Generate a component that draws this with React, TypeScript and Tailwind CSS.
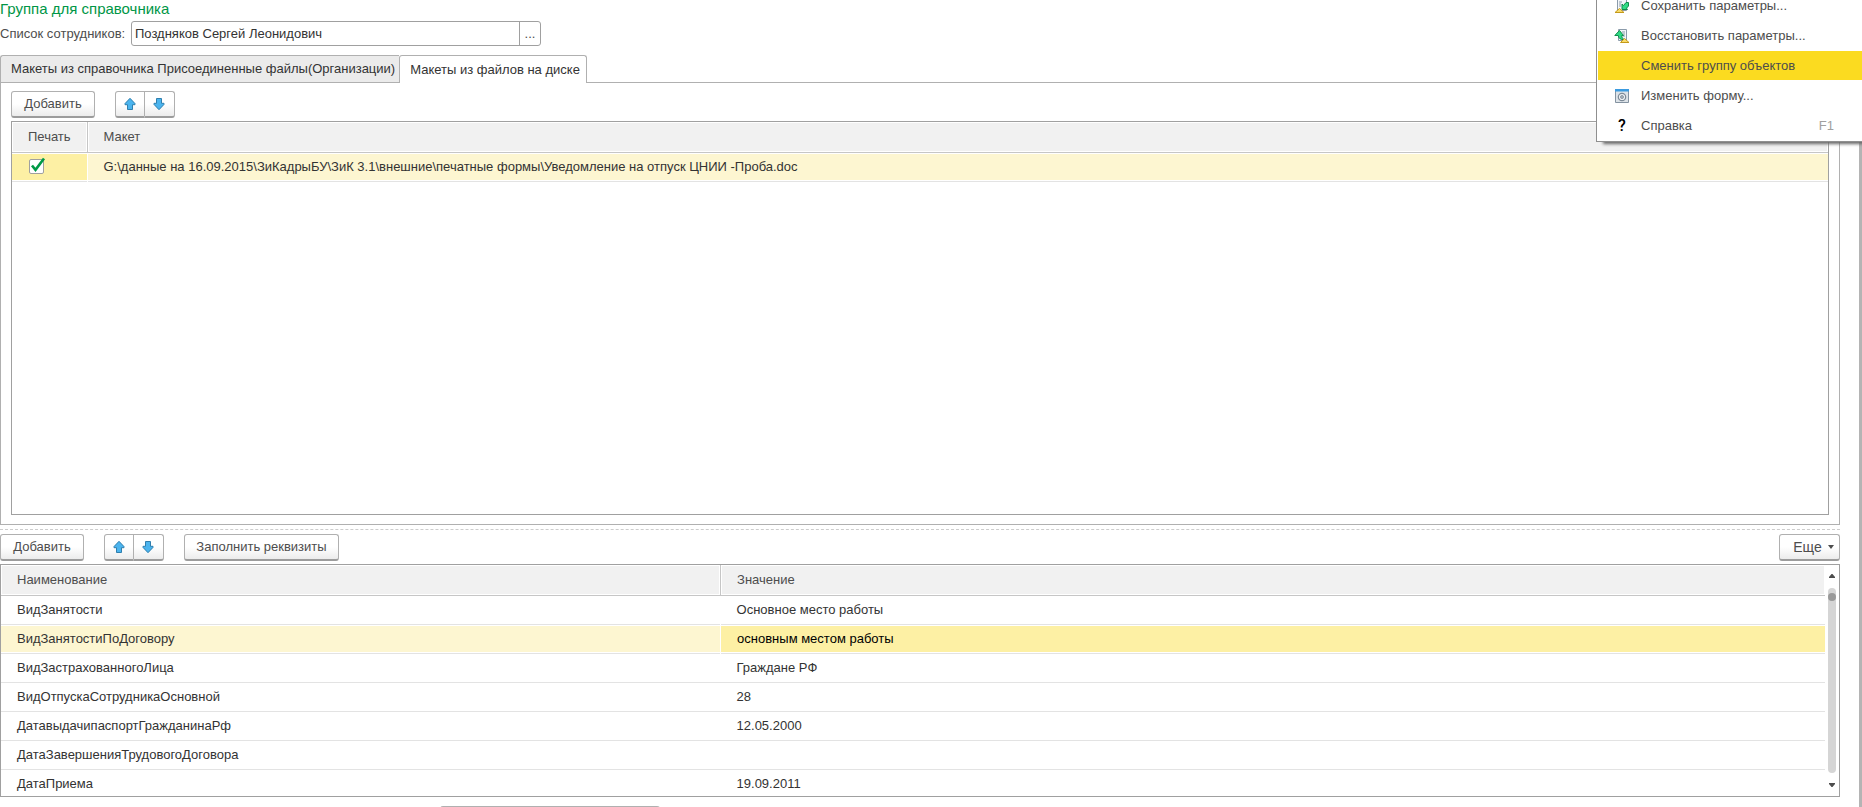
import { useState } from 'react';
import type { ReactNode } from 'react';
import { clsx } from 'clsx';

const requisites = [
  { name: 'ВидЗанятости', value: 'Основное место работы' },
  { name: 'ВидЗанятостиПоДоговору', value: 'основным местом работы' },
  { name: 'ВидЗастрахованногоЛица', value: 'Граждане РФ' },
  { name: 'ВидОтпускаСотрудникаОсновной', value: '28' },
  { name: 'ДатавыдачипаспортГражданинаРф', value: '12.05.2000' },
  { name: 'ДатаЗавершенияТрудовогоДоговора', value: '' },
  { name: 'ДатаПриема', value: '19.09.2011' },
];

const templates = [
  'G:\\данные на 16.09.2015\\ЗиКадрыБУ\\ЗиК 3.1\\внешние\\печатные формы\\Уведомление на отпуск ЦНИИ -Проба.doc',
];

function Arrow({ down = false }: { down?: boolean }) {
  return (
    <svg viewBox="0 0 14 14" className={clsx('size-[14px]', down && 'rotate-180')} aria-hidden="true">
      <path
        d="M7 1.3 12 6.6V7.700H9.5V12.5H4.5V7.700H2V6.6Z"
        fill="#4bb4ee"
        stroke="#2f7fae"
        strokeLinejoin="round"
      />
    </svg>
  );
}

function SaveIcon() {
  return (
    <svg viewBox="0 0 16 16" className="size-4" aria-hidden="true">
      <path d="M3.500 1.500h9v11h-9z" fill="#f3f6f9" stroke="#8b9bab" />
      <path d="M5 4h3M5 6h2M5 8h2" stroke="#8b9bab" />
      <path d="M8 11.500V6l1.500 1.500L12 4.500h2.500V8l-2 2.200 1 1.300Z" fill="#2fdc84" stroke="#128a4c" />
      <path d="M1 14.500h9L5.500 10.500Z" fill="#f8dc6a" stroke="#c59a1a" />
    </svg>
  );
}

function RestoreIcon() {
  return (
    <svg viewBox="0 0 16 16" className="size-4" aria-hidden="true">
      <path d="M4.500 1.500h8v11h-8z" fill="#f3f6f9" stroke="#8b9bab" />
      <path d="M8 4h3M9 6h2M9 8h2" stroke="#8b9bab" />
      <path d="M.8 7.500 5.500 2.500 9.500 7.500H7.800c0 2 .7 3 2.200 4-3 .5-5.500-1-5.800-4Z" fill="#2fdc84" stroke="#128a4c" />
      <path d="M6.500 14.500h8.500L10.500 10.500Z" fill="#f8dc6a" stroke="#c59a1a" />
    </svg>
  );
}

function FormIcon() {
  return (
    <svg viewBox="0 0 16 16" className="size-4" aria-hidden="true">
      <path d="M1.500 2.500h13v12h-13z" fill="#dde3e8" stroke="#8493a1" />
      <path d="M1 1h14v2.500H1z" fill="#3b9be0" />
      <circle cx="8" cy="9" r="3.700" fill="#eef1f4" stroke="#7c8a97" strokeWidth="1.200" />
      <circle cx="8" cy="9" r="1.500" fill="#aab4bd" stroke="#7c8a97" strokeWidth=".8" />
    </svg>
  );
}

const menuItems: { label: string; icon?: ReactNode; hint?: string; active?: boolean }[] = [
  { label: 'Сохранить параметры...', icon: <SaveIcon /> },
  { label: 'Восстановить параметры...', icon: <RestoreIcon /> },
  { label: 'Сменить группу объектов', active: true },
  { label: 'Изменить форму...', icon: <FormIcon /> },
  {
    label: 'Справка',
    icon: <span className="font-[Roboto,sans-serif] text-base font-medium text-black">?</span>,
    hint: 'F1',
  },
];

const buttonStyle =
  'flex h-[27px] items-center justify-center border border-[#b0b0b0] border-b-2 border-b-[#9c9c9c] bg-gradient-to-b from-white from-50% to-[#ececec] text-[#4d4d4d]';

const headCell = 'bg-[#f1f1f1] pl-4 font-normal shadow-[inset_0_0_0_1px_#fff]';
const rowTint = 'bg-[#fdf6d1] shadow-[inset_0_1px_#fff,inset_0_-1px_#fff]';
const cellTint = 'bg-[#fdf0a4] shadow-[inset_0_1px_#fff,inset_0_-1px_#fff]';

function Button({ children, className }: { children?: ReactNode; className?: string }) {
  return (
    <button type="button" className={clsx(buttonStyle, 'rounded-[3px]', className)}>
      {children}
    </button>
  );
}

function MoveButtons() {
  return (
    <div className="flex">
      <button
        type="button"
        aria-label="Переместить вверх"
        className={clsx(buttonStyle, 'w-[30px] rounded-l-[3px] pr-px')}
      >
        <Arrow />
      </button>
      <button
        type="button"
        aria-label="Переместить вниз"
        className={clsx(buttonStyle, 'w-[30px] rounded-r-[3px] border-l-0 pr-px')}
      >
        <Arrow down />
      </button>
    </div>
  );
}

function ContextMenu() {
  return (
    <div
      role="menu"
      className="absolute -top-[10px] right-0 z-10 w-[266px] border border-r-0 border-[#8f8f8f] bg-white pl-px shadow-[6px_3px_3px_-1px_#666]"
    >
      {menuItems.map((item) => (
        <button
          key={item.label}
          type="button"
          role="menuitem"
          className={clsx(
            'flex h-[30px] w-full items-center border-b border-white pr-7 pl-4 text-left text-[#4d4d4d]',
            item.active && 'bg-[#fbdb20]'
          )}
        >
          <span className="flex w-[27px] items-center">
            <span className="flex w-4 justify-center">{item.icon}</span>
          </span>
          {item.label}
          {item.hint && <span className="ml-auto text-[#a0a0a0]">{item.hint}</span>}
        </button>
      ))}
    </div>
  );
}

function TemplatesTable() {
  const [checked, setChecked] = useState(true);

  return (
    <div className="mt-[3px] h-[394px] border border-[#a0a0a0] bg-white">
      <table className="w-full table-fixed border-collapse text-left">
        <colgroup>
          <col className="w-[75px]" />
          <col />
        </colgroup>
        <thead>
          <tr className="h-[30px] border-b border-[#c6c6c6] text-[#4d4d4d]">
            <th className={clsx(headCell, 'border-r border-[#c6c6c6]')}>Печать</th>
            <th className={headCell}>Макет</th>
          </tr>
        </thead>
        <tbody>
          {templates.map((path) => (
            <tr key={path} className="h-[29px] border-b border-[#e3e3e3]">
              <td className={clsx(cellTint, 'border-r border-r-white pl-[17px]')}>
                <label className="relative block size-[15px]">
                  <input
                    type="checkbox"
                    aria-label="Печать"
                    checked={checked}
                    onChange={() => setChecked(!checked)}
                    className="block size-[15px] appearance-none rounded-[2px] border border-[#a0a0a0] bg-white"
                  />
                  {checked && (
                    <svg
                      viewBox="0 0 15 15"
                      className="pointer-events-none absolute inset-0 size-[15px] overflow-visible"
                      aria-hidden="true"
                    >
                      <path d="M3 6.500 6.500 10.800 15-.5" fill="none" stroke="#009a46" strokeWidth="2.600" />
                    </svg>
                  )}
                </label>
              </td>
              <td className={clsx(rowTint, 'pl-4 text-[#333]')}>{path}</td>
            </tr>
          ))}
        </tbody>
      </table>
    </div>
  );
}

function RequisitesTable() {
  return (
    <div className="mt-[3px] flex h-[233px] overflow-hidden border border-[#a0a0a0] bg-white">
      <table className="w-full table-fixed border-collapse self-start text-left">
        <colgroup>
          <col className="w-[39.45%]" />
          <col />
        </colgroup>
        <thead>
          <tr className="h-[30px] border-b border-[#c6c6c6] text-[#4d4d4d]">
            <th className={clsx(headCell, 'border-r border-[#c6c6c6]')}>Наименование</th>
            <th className={headCell}>Значение</th>
          </tr>
        </thead>
        <tbody>
          {requisites.map((row, index) => {
            const isActive = index === 1;

            return (
              <tr key={row.name} className="h-[29px] border-b border-[#e3e3e3] text-[#333]">
                <td className={clsx('pl-4', isActive && rowTint, isActive && 'border-r border-r-white')}>
                  {row.name}
                </td>
                <td className={clsx('pl-4', isActive && cellTint, isActive && 'text-black')}>{row.value}</td>
              </tr>
            );
          })}
        </tbody>
      </table>
      <div className="flex w-[14px] shrink-0 flex-col items-center py-[9px]">
        <svg viewBox="0 0 6 4" className="h-1 w-1.5" aria-hidden="true">
          <path d="M0 4V3L2.500 0H3.500L6 3V4Z" fill="#4d4d4d" />
        </svg>
        <div className="my-2.5 w-2 flex-1 rounded-full bg-[#d5d5d5] pt-[5px]">
          <div className="size-2 rounded-full bg-[#999]" />
        </div>
        <svg viewBox="0 0 6 4" className="h-1 w-1.5" aria-hidden="true">
          <path d="M0 0V1L2.500 4H3.500L6 1V0Z" fill="#4d4d4d" />
        </svg>
      </div>
    </div>
  );
}

export default function App() {
  return (
    <div className="relative h-screen overflow-hidden bg-white font-['Liberation_Sans',Arial,sans-serif] text-[13px] leading-4">
      <main className="h-full overflow-hidden border-r-3 border-[#b4b4b4] pr-[19px]">
        <h1 className="h-[21px] text-[15px] leading-[17px] text-[#009646]">Группа для справочника</h1>

        <div className="flex h-[25px] items-center">
          <label htmlFor="employees" className="w-[131px] text-[#4d4d4d]">
            Список сотрудников:
          </label>
          <div className="flex h-full w-[410px] rounded-[3px] border border-[#a0a0a0]">
            <input
              id="employees"
              defaultValue="Поздняков Сергей Леонидович"
              className="min-w-0 flex-1 px-[3px] text-[#333] outline-none"
            />
            <button type="button" aria-label="Выбрать" className="w-[21px] border-l border-[#a0a0a0] text-[#4d4d4d]">
              ...
            </button>
          </div>
        </div>

        {/* Template tabs */}
        <div role="tablist" className="mt-[9px] flex">
          <button
            type="button"
            role="tab"
            aria-selected="false"
            className="h-7 rounded-tl-[3px] border border-r-0 border-[#b0b0b0] bg-[#ebebeb] pr-1 pl-2.5 text-[#333]"
          >
            Макеты из справочника Присоединенные файлы(Организации)
          </button>
          <button
            type="button"
            role="tab"
            aria-selected="true"
            className="h-7 rounded-t-[3px] border border-b-0 border-[#b0b0b0] bg-white pr-1.5 pl-2.5 text-[#333]"
          >
            Макеты из файлов на диске
          </button>
          <div className="flex-1 border-b border-[#b0b0b0]" />
        </div>
        <div className="border border-t-0 border-[#b0b0b0] px-2.5 pt-2 pb-[9px]">
          <div className="flex gap-5">
            <Button className="w-[84px]">Добавить</Button>
            <MoveButtons />
          </div>
          <TemplatesTable />
        </div>

        <div className="mt-1 border-t border-dashed border-[#ccc]" />

        {/* Requisites */}
        <div className="mt-1 flex gap-5">
          <Button className="w-[84px]">Добавить</Button>
          <MoveButtons />
          <Button className="w-[155px]">Заполнить реквизиты</Button>
          <Button className="ml-auto w-[61px] gap-1.5 pl-2">
            <span className="text-sm">Еще</span>
            <svg viewBox="0 0 6 4" className="h-1 w-1.5" aria-hidden="true">
              <path d="M0 0H6L3 4Z" fill="#4d4d4d" />
            </svg>
          </Button>
        </div>
        <RequisitesTable />

        <Button className="mt-[9px] ml-[440px] w-[220px]" />
      </main>

      <ContextMenu />
    </div>
  );
}
